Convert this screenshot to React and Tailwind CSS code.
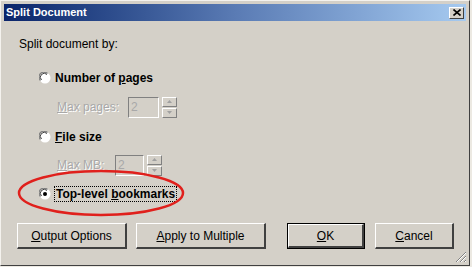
import React from 'react';

const FONT = { fontFamily: '"Liberation Sans", Arial, sans-serif' };

function Radio({ checked }) {
  return (
    <svg width="12" height="12" viewBox="0 0 12 12" className="shrink-0">
      <circle cx="6" cy="6" r="5.5" fill="#ffffff" />
      <path d="M1.5 8.5 A4.6 4.6 0 0 1 8.5 1.5" stroke="#808080" strokeWidth="1.2" fill="none" />
      <path d="M2.5 8 A3.6 3.6 0 0 1 8 2.5" stroke="#404040" strokeWidth="1" fill="none" />
      {checked && <circle cx="6" cy="6" r="2" fill="#000000" />}
    </svg>
  );
}

function Spinner() {
  return (
    <div className="flex flex-col gap-[1px] w-[15px] h-[21px]">
      {[0, 1].map((i) => (
        <div
          key={i}
          className="flex-1 bg-[#d4d0c8] border-t border-l border-t-white border-l-white border-r border-b border-r-[#808080] border-b-[#808080] flex items-center justify-center"
        >
          <svg width="5" height="3" viewBox="0 0 5 3">
            <path d={i === 0 ? 'M0 3 L2.5 0 L5 3 Z' : 'M0 0 L2.5 3 L5 0 Z'} fill="#a0a0a0" />
          </svg>
        </div>
      ))}
    </div>
  );
}

function SpinField({ underline, rest, inputW, labelW }) {
  return (
    <div className="flex items-center h-[22px] ml-[53px]">
      <span className="text-[#a8a8a8] text-[12px]" style={{ width: labelW, textShadow: '1px 1px 0 #ffffff' }}>
        <span className="underline">{underline}</span>
        {rest}
      </span>
      <div
        className="h-[21px] bg-[#d4d0c8] border border-t-[#808080] border-l-[#808080] border-r-white border-b-white flex items-center pl-[2px] text-[12px] text-[#a8a8a8]"
        style={{ width: inputW }}
      >
        2
      </div>
      <div className="ml-[3px]">
        <Spinner />
      </div>
    </div>
  );
}

function Btn({ w, children, isDefault }) {
  return (
    <div
      className={`h-[26px] flex items-center justify-center text-[12px] text-black bg-[#d4d0c8] ${
        isDefault ? 'border border-black' : ''
      }`}
      style={{ width: w }}
    >
      <div className="w-full h-full border-t border-l border-t-white border-l-white border-r-2 border-b-2 border-r-[#404040] border-b-[#404040] flex items-center justify-center">
        {children}
      </div>
    </div>
  );
}

export default function App() {
  return (
    <div className="w-[472px] h-[267px] bg-[#ece9e2] overflow-hidden" style={FONT}>
      <div className="relative w-[470px] h-[266px] bg-[#d4d0c8] border-t border-l border-t-[#f4f2ee] border-l-[#f4f2ee] border-r border-b border-r-[#404040] border-b-[#404040] pt-[3px] px-[3px]">
        {/* title bar */}
        <div className="h-[17px] flex items-center justify-between bg-gradient-to-r from-[#0a246a] via-[#5a7bb4] to-[#a6caf0] pl-[2px] pr-[2px]">
          <span className="text-white font-bold text-[11px] leading-none">Split Document</span>
          <div className="w-[15px] h-[12px] bg-[#d4d0c8] border-t border-l border-t-white border-l-white border-r border-b border-r-[#404040] border-b-[#404040] flex items-center justify-center">
            <svg width="8" height="7" viewBox="0 0 8 7">
              <path d="M0.5 0.5 L7.5 6.5 M7.5 0.5 L0.5 6.5" stroke="#000" strokeWidth="1.6" />
            </svg>
          </div>
        </div>

        {/* body */}
        <div className="flex flex-col">
          <div className="h-[18px] mt-[14px] ml-[15px] flex items-center text-[12px] text-black">Split document by:</div>

          <div className="h-[18px] mt-[16px] ml-[35px] flex items-center gap-[4px]">
            <Radio />
            <span className="font-bold text-[12px] text-black">
              Number of <span className="underline">p</span>ages
            </span>
          </div>

          <div className="mt-[9px]">
            <SpinField underline="M" rest="ax pages:" labelW={71} inputW={31} />
          </div>

          <div className="h-[18px] mt-[10px] ml-[35px] flex items-center gap-[4px]">
            <Radio />
            <span className="font-bold text-[12px] text-black">
              <span className="underline">F</span>ile size
            </span>
          </div>

          <div className="mt-[8px]">
            <SpinField underline="M" rest="ax MB:" labelW={58} inputW={29} />
          </div>

          <div className="h-[18px] mt-[9px] ml-[35px] flex items-center gap-[3px]">
            <Radio checked />
            <span className="font-bold text-[12px] text-black border border-dotted border-black px-[1px] leading-[14px]">
              Top-level <span className="underline">b</span>ookmarks
            </span>
          </div>

          <div className="mt-[20px] ml-[13px] flex items-center">
            <Btn w={110}>
              <span>
                <span className="underline">O</span>utput Options
              </span>
            </Btn>
            <div className="ml-[9px]">
              <Btn w={130}>
                <span>
                  <span className="underline">A</span>pply to Multiple
                </span>
              </Btn>
            </div>
            <div className="ml-[21px]">
              <Btn w={78} isDefault>
                <span>
                  <span className="underline">O</span>K
                </span>
              </Btn>
            </div>
            <div className="ml-[10px]">
              <Btn w={79}>
                <span>
                  <span className="underline">C</span>ancel
                </span>
              </Btn>
            </div>
          </div>
        </div>

        {/* resize grip */}
        <svg className="absolute right-[2px] bottom-[2px]" width="12" height="12" viewBox="0 0 12 12">
          <path d="M11 1 L1 11 M11 5 L5 11 M11 9 L9 11" stroke="#808080" strokeWidth="1" />
          <path d="M11 2 L2 11 M11 6 L6 11 M11 10 L10 11" stroke="#ffffff" strokeWidth="1" />
        </svg>

        {/* red annotation ellipse */}
        <svg className="absolute left-[16px] top-[168px] pointer-events-none" width="170" height="49" viewBox="0 0 170 49">
          <ellipse cx="84" cy="24" rx="82" ry="22" fill="none" stroke="#e0201c" strokeWidth="2.5" />
        </svg>
      </div>
    </div>
  );
}
